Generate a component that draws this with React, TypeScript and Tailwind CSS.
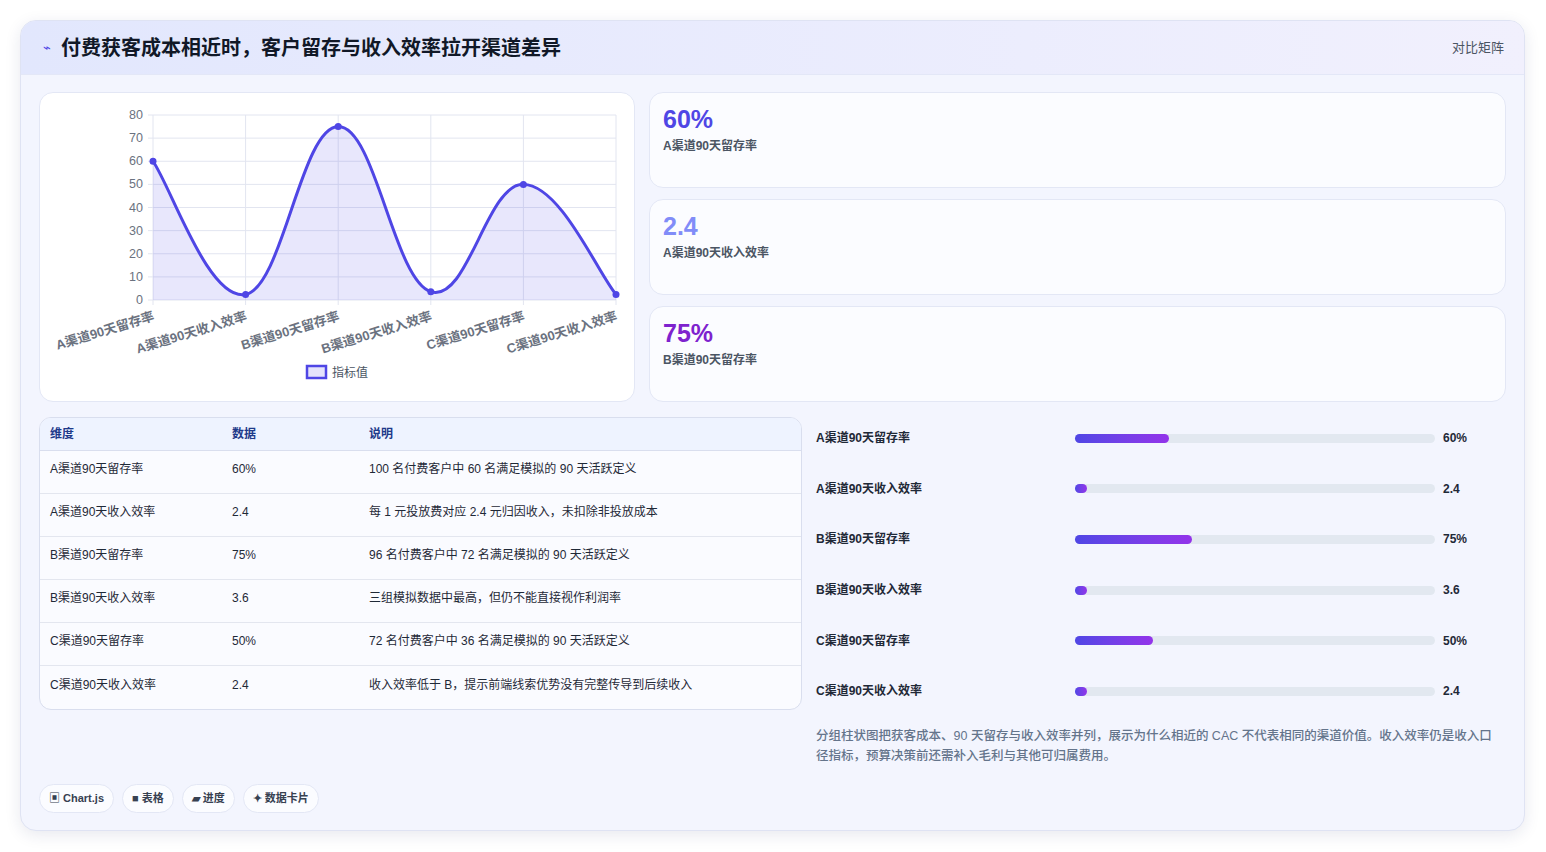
import React from "react";

const vals = [60, 2.4, 75, 3.6, 50, 2.4];
const labels = ["A渠道90天留存率", "A渠道90天收入效率", "B渠道90天留存率", "B渠道90天收入效率", "C渠道90天留存率", "C渠道90天收入效率"];
const X0 = 113, X1 = 576, Y0 = 207, YT = 22;
const px = (i: number) => X0 + (i * (X1 - X0)) / 5;
const py = (v: number) => Y0 - (v * (Y0 - YT)) / 80;

function curve() {
  const pts = vals.map((v, i) => [px(i), py(v)]);
  let d = `M${pts[0][0]},${pts[0][1]}`;
  const t = 0.4;
  for (let i = 0; i < pts.length - 1; i++) {
    const p0 = pts[i - 1] || pts[i], p1 = pts[i], p2 = pts[i + 1], p3 = pts[i + 2] || pts[i + 1];
    const c1 = [p1[0] + ((p2[0] - p0[0]) * t) / 2, p1[1] + ((p2[1] - p0[1]) * t) / 2];
    const c2 = [p2[0] - ((p3[0] - p1[0]) * t) / 2, p2[1] - ((p3[1] - p1[1]) * t) / 2];
    d += ` C${c1[0]},${c1[1]} ${c2[0]},${c2[1]} ${p2[0]},${p2[1]}`;
  }
  return d;
}

function Chart() {
  const d = curve();
  return (
    <svg width="595" height="309" viewBox="0 0 595 309" style={{ fontFamily: "'Liberation Sans','Noto Sans CJK SC',sans-serif" }}>
      {[0, 10, 20, 30, 40, 50, 60, 70, 80].map((v) => (
        <g key={v}>
          <line x1={X0 - 5} x2={X1} y1={py(v)} y2={py(v)} stroke="#e2e5f0" />
          <text x={X0 - 10} y={py(v) + 4} textAnchor="end" fontSize="12.5" fill="#6b7280">{v}</text>
        </g>
      ))}
      {vals.map((_, i) => (
        <line key={i} x1={px(i)} x2={px(i)} y1={YT} y2={Y0 + 5} stroke="#e2e5f0" />
      ))}
      <path d={`${d} L${X1},${Y0} L${X0},${Y0} Z`} fill="rgba(79,70,229,0.13)" />
      <path d={d} fill="none" stroke="#4f46e5" strokeWidth="3" />
      {vals.map((v, i) => (
        <circle key={i} cx={px(i)} cy={py(v)} r="3.5" fill="#4f46e5" />
      ))}
      {labels.map((l, i) => (
        <text key={l} x={px(i) + 2} y={Y0 + 20} textAnchor="end" fontSize="13" fontWeight="600" fill="#6b7280" transform={`rotate(-17 ${px(i) + 2} ${Y0 + 20})`}>{l}</text>
      ))}
      <rect x="267" y="273" width="19" height="12" fill="rgba(79,70,229,0.15)" stroke="#4f46e5" strokeWidth="2.5" />
      <text x="292" y="284" fontSize="12" fill="#4b5563">指标值</text>
    </svg>
  );
}

const rows = [
  ["A渠道90天留存率", "60%", "100 名付费客户中 60 名满足模拟的 90 天活跃定义"],
  ["A渠道90天收入效率", "2.4", "每 1 元投放费对应 2.4 元归因收入，未扣除非投放成本"],
  ["B渠道90天留存率", "75%", "96 名付费客户中 72 名满足模拟的 90 天活跃定义"],
  ["B渠道90天收入效率", "3.6", "三组模拟数据中最高，但仍不能直接视作利润率"],
  ["C渠道90天留存率", "50%", "72 名付费客户中 36 名满足模拟的 90 天活跃定义"],
  ["C渠道90天收入效率", "2.4", "收入效率低于 B，提示前端线索优势没有完整传导到后续收入"],
];
const bars = [94, 12, 117, 12, 78, 12];

export default function App() {
  return (
    <div className="min-h-[852px] bg-white p-[20px] pr-[20px]" style={{ fontFamily: "'Liberation Sans','Noto Sans CJK SC',sans-serif" }}>
      <div className="w-[1505px] h-[811px] rounded-[16px] border border-[#dfe3f3] bg-[#f3f5fe] shadow-[0_4px_16px_rgba(30,41,99,0.10)] overflow-hidden flex flex-col">
        <div className="h-[54px] shrink-0 flex items-center justify-between px-[20px] bg-gradient-to-r from-[#e2e7fd] to-[#f1f0fd] border-b border-[#e3e7f7]">
          <div className="flex items-center gap-[10px] pl-[2px]">
            <span className="text-[#4f46e5] text-[13px]">⌁</span>
            <span className="text-[20px] font-bold text-[#111827]">付费获客成本相近时，客户留存与收入效率拉开渠道差异</span>
          </div>
          <span className="text-[13px] text-[#4b5563]">对比矩阵</span>
        </div>
        <div className="flex-1 px-[18px] pt-[17px] flex flex-col">
          <div className="flex gap-[14px]">
            <div className="w-[596px] h-[310px] rounded-[14px] border border-[#e3e7f5] bg-white overflow-hidden">
              <Chart />
            </div>
            <div className="flex-1 flex flex-col gap-[11px]">
              {[["60%", "text-[#4f46e5]", "A渠道90天留存率"], ["2.4", "text-[#818cf8]", "A渠道90天收入效率"], ["75%", "text-[#7e22ce]", "B渠道90天留存率"]].map(([v, c, l]) => (
                <div key={l} className="h-[96px] rounded-[14px] border border-[#e3e7f5] bg-[#fbfcff] px-[13px] pt-[10px]">
                  <div className={`text-[25px] font-extrabold leading-[32px] ${c}`}>{v}</div>
                  <div className="text-[12px] font-semibold text-[#4b5563] mt-[2px]">{l}</div>
                </div>
              ))}
            </div>
          </div>
          <div className="flex gap-[14px] mt-[15px]">
            <div className="w-[763px]">
              <div className="rounded-[12px] border border-[#d9deee] bg-[#fafbff] overflow-hidden">
                <div className="h-[33px] flex items-center bg-[#eef3ff] border-b border-[#d9deee] text-[12px] font-semibold text-[#1e3a8a]">
                  <div className="w-[192px] pl-[10px]">维度</div>
                  <div className="w-[137px]">数据</div>
                  <div>说明</div>
                </div>
                {rows.map((r, i) => (
                  <div key={i} className={`h-[43px] flex items-center pb-[6px] text-[12px] text-[#1f2937] ${i < 5 ? "border-b border-[#e3e6ef]" : ""}`}>
                    <div className="w-[192px] pl-[10px]">{r[0]}</div>
                    <div className="w-[137px]">{r[1]}</div>
                    <div>{r[2]}</div>
                  </div>
                ))}
              </div>
            </div>
            <div className="flex-1 -mt-[4px]">
              {rows.map((r, i) => (
                <div key={i} className="h-[50.6px] flex items-center">
                  <div className="w-[259px] text-[12px] font-semibold text-[#1f2937]">{r[0]}</div>
                  <div className="w-[360px] h-[9px] rounded-full bg-[#e2e8f0]">
                    <div className="h-full rounded-full bg-gradient-to-r from-[#4f46e5] to-[#9333ea]" style={{ width: bars[i] }} />
                  </div>
                  <div className="ml-[8px] text-[12px] font-bold text-[#1f2937]">{r[1]}</div>
                </div>
              ))}
              <p className="mt-[9px] pr-[8px] text-[12.5px] leading-[20px] text-[#64748b] font-medium">分组柱状图把获客成本、90 天留存与收入效率并列，展示为什么相近的 CAC 不代表相同的渠道价值。收入效率仍是收入口径指标，预算决策前还需补入毛利与其他可归属费用。</p>
            </div>
          </div>
          <div className="mt-auto mb-[17px] flex gap-[8px]">
            {["▣ Chart.js", "■ 表格", "▰ 进度", "✦ 数据卡片"].map((c) => (
              <span key={c} className="h-[29px] px-[9px] flex items-center rounded-full border border-[#e3e7f5] bg-[#fbfcff] text-[11px] font-semibold text-[#374151]">{c}</span>
            ))}
          </div>
        </div>
      </div>
    </div>
  );
}
